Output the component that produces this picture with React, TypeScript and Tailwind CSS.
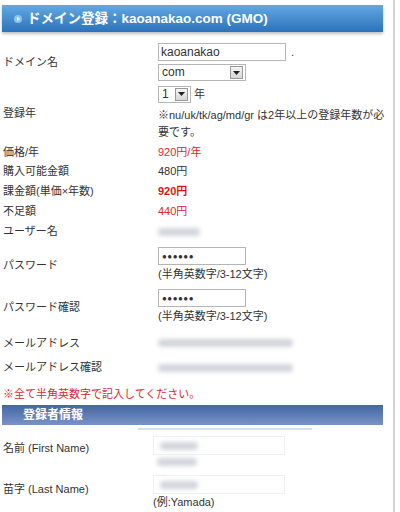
const font = { fontFamily: '"Liberation Sans", "Noto Sans CJK JP", sans-serif' };

function Caret() {
  return (
    <span className="flex h-[13px] w-[13px] items-center justify-center border border-[#9a9a9a] bg-gradient-to-b from-[#f4f4f4] to-[#d6d6d6]">
      <svg width="7" height="4" viewBox="0 0 7 4">
        <path d="M0 0h7L3.5 4z" fill="#222" />
      </svg>
    </span>
  );
}

function Row({ label, h, children, className = '' }: { label: string; h: string; children: React.ReactNode; className?: string }) {
  return (
    <div className={`flex items-center ${h} ${className}`}>
      <div className="w-[158px] shrink-0 pl-[3px]">{label}</div>
      <div className="flex flex-col">{children}</div>
    </div>
  );
}

function Blur({ w }: { w: string }) {
  return <span className={`block h-[8px] ${w} rounded-sm bg-[#d2d5dc] blur-[2px]`} />;
}

export default function App() {
  return (
    <div className="flex h-[512px] w-[400px] overflow-hidden bg-white text-[11px] leading-[17px] text-[#333]" style={font}>
      <div className="w-[395px] shrink-0 border-r-2 border-[#d4d4d4]">
        {/* Title bar */}
        <div className="ml-[2px] mt-[5px] flex h-[27px] w-[381px] items-center bg-gradient-to-b from-[#62a9e4] to-[#2c72bb] pl-[12px] shadow-[0_2px_3px_rgba(0,0,0,0.25)]">
          <span className="mr-[5px] flex h-[8px] w-[8px] items-center justify-center rounded-full bg-[#8ec3ee]">
            <span className="h-0 w-0 border-y-[2px] border-l-[3px] border-y-transparent border-l-white" />
          </span>
          <span className="text-[13.5px] font-bold text-white">ドメイン登録：kaoanakao.com (GMO)</span>
        </div>

        <div className="mt-[8px]">
          <Row label="ドメイン名" h="h-[44px]">
            <div className="flex items-center">
              <span className="flex h-[18px] w-[128px] items-center border border-[#b5b5b5] pl-[2px] text-[12px]">kaoanakao</span>
              <span className="ml-[5px]">.</span>
            </div>
            <span className="mt-[3px] flex h-[17px] w-[88px] items-center justify-between border border-[#b5b5b5] pl-[3px] pr-[2px] text-[12px]">
              com
              <Caret />
            </span>
          </Row>

          <Row label="登録年" h="h-[58px]">
            <div className="flex items-center">
              <span className="flex h-[17px] w-[33px] items-center justify-between border border-[#b5b5b5] pl-[3px] pr-[2px] text-[12px]">
                1
                <Caret />
              </span>
              <span className="ml-[3px]">年</span>
            </div>
            <span className="mt-[4px] w-[230px] break-all">※nu/uk/tk/ag/md/gr は2年以上の登録年数が必要です。</span>
          </Row>

          <Row label="価格/年" h="h-[20px]">
            <span className="text-[#e0262c]">920円/年</span>
          </Row>
          <Row label="購入可能金額" h="h-[19px]">
            <span>480円</span>
          </Row>
          <Row label="課金額(単価×年数)" h="h-[20px]">
            <span className="font-bold text-[#e0121a]">920円</span>
          </Row>
          <Row label="不足額" h="h-[20px]">
            <span className="text-[#e0262c]">440円</span>
          </Row>
          <Row label="ユーザー名" h="h-[21px]">
            <Blur w="w-[42px]" />
          </Row>

          <Row label="パスワード" h="h-[42px]" className="mt-[2px]">
            <span className="flex h-[18px] w-[88px] items-center border border-[#b5b5b5] pl-[3px] text-[8px] tracking-[0.5px]">●●●●●●</span>
            <span className="mt-[1px]">(半角英数字/3-12文字)</span>
          </Row>
          <Row label="パスワード確認" h="h-[42px]">
            <span className="flex h-[18px] w-[88px] items-center border border-[#b5b5b5] pl-[3px] text-[8px] tracking-[0.5px]">●●●●●●</span>
            <span className="mt-[1px]">(半角英数字/3-12文字)</span>
          </Row>

          <Row label="メールアドレス" h="h-[24px]" className="mt-[3px]">
            <Blur w="w-[135px]" />
          </Row>
          <Row label="メールアドレス確認" h="h-[25px]">
            <Blur w="w-[135px]" />
          </Row>

          <div className="mt-[6px] h-[17px] pl-[3px] text-[#e0262c]">※全て半角英数字で記入してください。</div>

          {/* Section bar */}
          <div className="ml-[2px] mt-[2px] flex h-[20px] w-[381px] items-center bg-gradient-to-b from-[#4565a3] to-[#7893c7] pl-[21px]">
            <span className="text-[12px] font-bold text-white">登録者情報</span>
          </div>
          <div className="ml-[138px] mt-[3px] h-[2px] w-[174px] bg-[#d5dff0]" />

          <div className="flex h-[36px] items-center">
            <div className="w-[153px] shrink-0 pl-[3px]">名前 (First Name)</div>
            <div className="flex flex-col pt-[6px]">
              <span className="flex h-[19px] w-[132px] items-center border border-[#efefef] pl-[6px]">
                <Blur w="w-[38px]" />
              </span>
              <span className="mt-[3px] pl-[4px]">
                <Blur w="w-[40px]" />
              </span>
            </div>
          </div>
          <div className="flex h-[46px] items-center">
            <div className="w-[153px] shrink-0 pl-[3px]">苗字 (Last Name)</div>
            <div className="flex flex-col pt-[8px]">
              <span className="flex h-[19px] w-[132px] items-center border border-[#efefef] pl-[6px]">
                <Blur w="w-[38px]" />
              </span>
              <span>(例:Yamada)</span>
            </div>
          </div>
        </div>
      </div>
    </div>
  );
}
